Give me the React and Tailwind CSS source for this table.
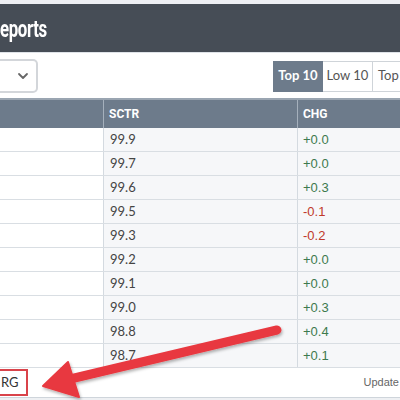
import React from 'react';

const rows = [
  { sctr: '99.9', chg: '+0.0' },
  { sctr: '99.7', chg: '+0.0' },
  { sctr: '99.6', chg: '+0.3' },
  { sctr: '99.5', chg: '-0.1' },
  { sctr: '99.3', chg: '-0.2' },
  { sctr: '99.2', chg: '+0.0' },
  { sctr: '99.1', chg: '+0.0' },
  { sctr: '99.0', chg: '+0.3' },
  { sctr: '98.8', chg: '+0.4' },
  { sctr: '98.7', chg: '+0.1' },
];

const Chevron = () => (
  <svg width="12" height="8" viewBox="0 0 12 8" fill="none">
    <path d="M2 2l4 4 4-4" stroke="#666" strokeWidth="1.8" strokeLinecap="round" strokeLinejoin="round" />
  </svg>
);

const Arrow = () => (
  <svg className="absolute left-0 top-0 pointer-events-none" width="400" height="400" viewBox="0 0 400 400">
    <defs>
      <filter id="sh" x="-10%" y="-10%" width="120%" height="130%">
        <feDropShadow dx="1" dy="2" stdDeviation="1.5" floodColor="#000" floodOpacity="0.3" />
      </filter>
    </defs>
    <g filter="url(#sh)" fill="#e8383f" stroke="#e8383f">
      <line x1="277" y1="330" x2="66" y2="380" strokeWidth="9" strokeLinecap="round" />
      <polygon points="43,386 68,362 79,397" strokeWidth="2" strokeLinejoin="round" />
    </g>
  </svg>
);

export default function App() {
  return (
    <div className="relative w-[400px] h-[400px] overflow-hidden bg-[#eef0f3] font-['Lato',sans-serif]">
      <div className="h-[4px] bg-[#eef0f4]" />
      {/* Title bar */}
      <div className="h-[48px] bg-[#464d56] flex items-center">
        <span className="text-white font-['Roboto',sans-serif] font-bold text-[24px] tracking-[-0.5px] origin-left scale-x-[0.7] inline-block leading-none mt-[2px]">
          eports
        </span>
      </div>
      {/* Controls */}
      <div className="h-[46px] bg-white border-t border-[#dfe3e8] flex items-center justify-between">
        <div className="w-[38px] h-[34px] border-2 border-l-0 border-[#d3d6da] rounded-r-[5px] flex items-center justify-end pr-[7px]">
          <Chevron />
        </div>
        <div className="flex h-[31px] mt-[1px]">
          <div className="w-[50px] bg-[#6d7b8b] text-white font-bold text-[13px] flex items-center justify-center">Top 10</div>
          <div className="w-[50px] border border-l-0 border-[#cfd4d9] text-[#555] text-[13px] flex items-center justify-center">Low 10</div>
          <div className="w-[27px] border border-l-0 border-r-0 border-[#cfd4d9] text-[#555] text-[13px] flex items-center pl-[5px]">Top</div>
        </div>
      </div>
      {/* Table */}
      <div className="bg-white">
        <div className="h-[30px] bg-[#6d7b8b] border-t-2 border-[#9aa5b1] flex text-white font-['Roboto',sans-serif] font-bold text-[12px]">
          <div className="w-[103px]" />
          <div className="w-[194px] border-l border-[#a5b0bc] flex items-center pl-[5px]">SCTR</div>
          <div className="flex-1 border-l border-[#a5b0bc] flex items-center pl-[5px]">CHG</div>
        </div>
        {rows.map((r, i) => (
          <div key={i} className="h-[24px] flex border-b border-[#d9dee3] text-[13px]">
            <div className="w-[103px] bg-white" />
            <div className="w-[194px] bg-[#f6f7f9] border-l border-[#d4dae0] flex items-center pl-[6px] text-[#444]">
              {r.sctr}
            </div>
            <div
              className={`flex-1 bg-[#f6f7f9] border-l border-[#d4dae0] flex items-center pl-[5px] font-['Liberation_Sans',sans-serif] ${
                r.chg.startsWith('-') ? 'text-[#c0392b]' : 'text-[#3d7a4e]'
              }`}
            >
              {r.chg}
            </div>
          </div>
        ))}
        <div className="h-[30px] flex items-center justify-between border-b border-[#cfd5db]">
          <div className="h-[27px] w-[28px] border-2 border-l-0 border-[#d9434a] flex items-center pl-[1px] text-[13px] text-[#333]">
            RG
          </div>
          <span className="text-[11px] text-[#666] font-['Liberation_Sans',sans-serif] mr-[1px]">Update</span>
        </div>
      </div>
      <Arrow />
    </div>
  );
}
